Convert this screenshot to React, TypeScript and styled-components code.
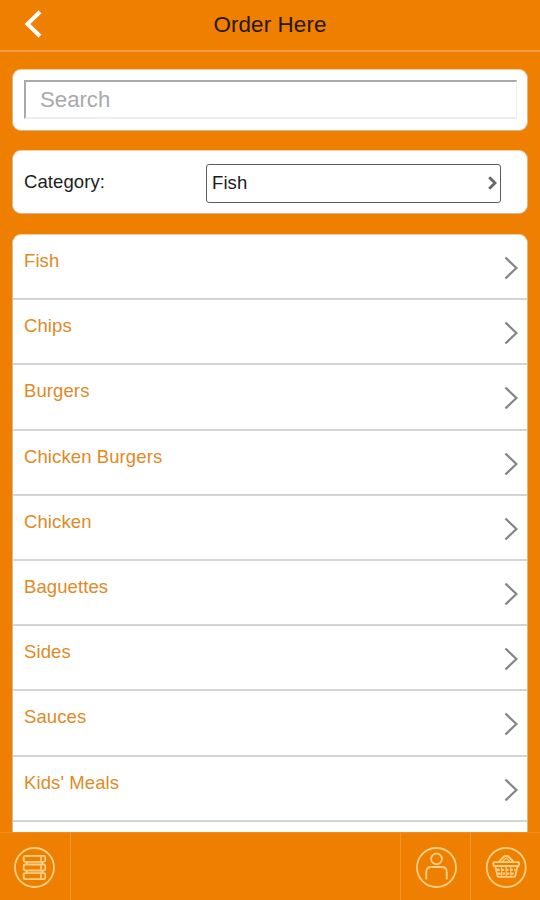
import React from "react";
import styled, { createGlobalStyle } from "styled-components";

const GlobalStyle = createGlobalStyle`
  * { box-sizing: border-box; }
  body { margin: 0; background: #ef7f00; }
  button { font: inherit; letter-spacing: inherit; }
`;

const Screen = styled.div`
  width: 540px;
  height: 900px;
  display: flex;
  flex-direction: column;
  overflow: hidden;
  background: #ef7f00;
  font-family: "Liberation Sans", Arial, sans-serif;
  font-size: 18.5px;
  letter-spacing: 0.1px;
  color: #1c1c1c;
`;

const Header = styled.header`
  flex: none;
  height: 52px;
  display: grid;
  grid-template-columns: 70px 1fr 70px;
  align-items: center;
  border-bottom: 2px solid #f39d40;
`;

const BackButton = styled.button`
  height: 50px;
  padding: 0 0 2px 22px;
  border: 0;
  background: none;
  display: flex;
  align-items: center;
`;

const Title = styled.h1`
  margin: 0;
  padding-bottom: 1px;
  text-align: center;
  font-size: 22.4px;
  font-weight: 400;
  line-height: 26px;
  color: #25170a;
`;

const Content = styled.main`
  flex: 1;
  min-height: 0;
  overflow: hidden;
  padding: 17px 12px 0;
  display: flex;
  flex-direction: column;
`;

const Card = styled.section`
  flex: none;
  background: #fff;
  border: 1px solid #d9b78c;
  border-top-color: #f3cfa0;
  border-radius: 9px;
`;

const SearchCard = styled(Card)`
  height: 62px;
  padding: 10px 10px 0 11px;
`;

const SearchInput = styled.input`
  display: block;
  width: 100%;
  height: 39px;
  padding: 0 14px;
  border: 2px solid;
  border-color: #a9a9a9 #eeeeee #eeeeee #a9a9a9;
  border-right-width: 1px;
  border-radius: 0;
  outline: 0;
  background: #fff;
  font: 22.2px "Liberation Sans", Arial, sans-serif;
  &::placeholder { color: #a9a9a9; }
`;

const CategoryCard = styled(Card)`
  height: 64px;
  margin: 19px 0 20px;
  padding: 0 26px 0 11px;
  display: flex;
  align-items: center;
  justify-content: space-between;
`;

const SelectBox = styled.button`
  width: 295px;
  height: 39px;
  margin-top: 2px;
  padding: 0 3px 0 5px;
  display: flex;
  align-items: center;
  justify-content: space-between;
  border: 1px solid #5c5c5c;
  border-radius: 3px;
  background: #fff;
  color: #1c1c1c;
`;

const List = styled(Card)`
  overflow: hidden;
`;

const Row = styled.div`
  height: 65.2px;
  padding: 0 9px 0 11px;
  display: flex;
  justify-content: space-between;
  border-bottom: 2px solid #d4d4d4;
  color: #e08a26;
`;

const RowLabel = styled.span`
  padding-top: 15px;
  line-height: 21px;
`;

const RowArrow = styled.svg`
  margin-top: 21px;
`;

const Footer = styled.footer`
  flex: none;
  height: 68px;
  display: flex;
  border-top: 1px solid #f28f1e;
`;

const Tab = styled.button<{ $side: "left" | "right" }>`
  width: ${(p) => (p.$side === "left" ? 71 : 70)}px;
  padding: 2px 0 0;
  display: flex;
  align-items: center;
  justify-content: center;
  background: none;
  border: 0 solid #f3932b;
  border-${(p) => (p.$side === "left" ? "right" : "left")}-width: 1px;
`;

const Spacer = styled.div`
  flex: 1;
`;

const iconProps = {
  width: 42,
  height: 42,
  viewBox: "0 0 42 42",
  fill: "none",
  stroke: "#ffd083",
  strokeWidth: 1.8,
  strokeLinejoin: "round" as const,
};

const MenuIcon = () => (
  <svg {...iconProps}>
    <circle cx="20.5" cy="20.5" r="19.5" />
    {[8.8, 17.5, 26.2].map((y) => (
      <React.Fragment key={y}>
        <rect x="9.7" y={y} width="21.5" height="6" rx="1.5" />
        <path d={`M27 ${y + 1}v4`} />
      </React.Fragment>
    ))}
    <path d="M12.7 14.8v2.7M28.2 14.8v2.7M12.7 23.5v2.7M28.2 23.5v2.7" />
  </svg>
);

const UserIcon = () => (
  <svg {...iconProps}>
    <circle cx="21.5" cy="20.5" r="19.5" />
    <circle cx="21.5" cy="11.9" r="5.4" />
    <path d="M11.3 32.5V25c0-3.5 1.7-5 5-5h10.4c3.3 0 5 1.5 5 5v7.5" />
  </svg>
);

const BasketIcon = () => (
  <svg {...iconProps}>
    <circle cx="21.2" cy="20.5" r="19.5" />
    <rect x="8.4" y="15.2" width="25.6" height="3.8" rx="1" />
    <path d="m13.6 15 6-6h3.2l6 6" />
    <path d="m17.1 15 4.1-4.2 4.1 4.2" strokeWidth="1.2" />
    <path d="m10.4 19.3 2 9.2q.3 1.3 1.4 1.3H29q1.1 0 1.4-1.3l2-9.2" />
    <path d="M12 22.8h18.6M13 26.6h16.6" strokeWidth="2.2" strokeDasharray="2.8 1.5" />
    <path d="M16.6 19.5v9.5M21.2 19.5v9.5M25.9 19.5v9.5" strokeWidth="1" />
  </svg>
);

const categories = [
  "Fish",
  "Chips",
  "Burgers",
  "Chicken Burgers",
  "Chicken",
  "Baguettes",
  "Sides",
  "Sauces",
  "Kids' Meals",
];

export default function App() {
  return (
    <>
      <GlobalStyle />
      <Screen>
        <Header>
          <BackButton aria-label="Back">
            <svg width="22" height="28" viewBox="0 0 22 28" fill="none" stroke="#fff" strokeWidth="4">
              <path d="M18 1.8 5.5 14 18 26.2" />
            </svg>
          </BackButton>
          <Title>Order Here</Title>
        </Header>
        <Content>
          <SearchCard>
            <SearchInput placeholder="Search" />
          </SearchCard>
          <CategoryCard>
            <span>Category:</span>
            <SelectBox>
              <span>Fish</span>
              <svg width="9" height="14" viewBox="0 0 9 14" fill="none" stroke="#666" strokeWidth="2.8">
                <path d="M1.2 1.3 7 7l-5.8 5.7" />
              </svg>
            </SelectBox>
          </CategoryCard>
          <List>
            {categories.map((name) => (
              <Row key={name}>
                <RowLabel>{name}</RowLabel>
                <RowArrow width="14" height="24" viewBox="0 0 14 24" fill="none" stroke="#858585" strokeWidth="2.3">
                  <path d="m1.4 1.5 11 10.5-11 10.5" />
                </RowArrow>
              </Row>
            ))}
            <Row />
          </List>
        </Content>
        <Footer>
          <Tab $side="left" aria-label="Menu">
            <MenuIcon />
          </Tab>
          <Spacer />
          <Tab $side="right" aria-label="Account">
            <UserIcon />
          </Tab>
          <Tab $side="right" aria-label="Basket">
            <BasketIcon />
          </Tab>
        </Footer>
      </Screen>
    </>
  );
}
